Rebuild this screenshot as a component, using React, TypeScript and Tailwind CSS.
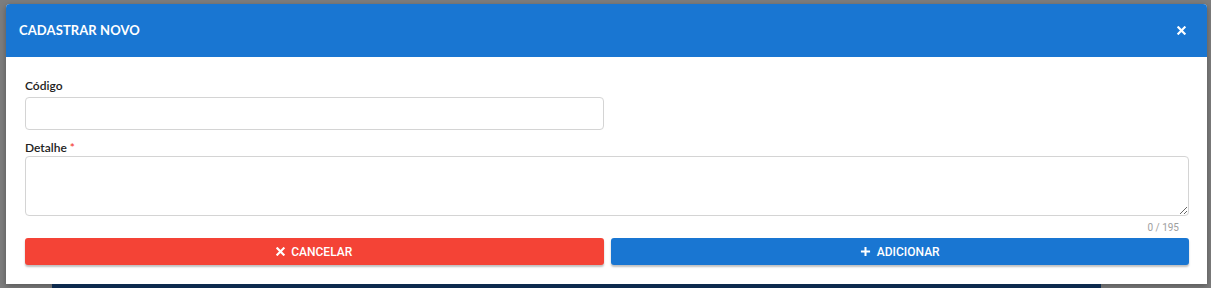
import React, { useState } from 'react';

const App: React.FC = () => {
  const [codigo, setCodigo] = useState('');
  const [detalhe, setDetalhe] = useState('');

  return (
    <div className="h-[288px] w-full overflow-hidden bg-[#7d7d7d] flex flex-col">
      <div className="ml-[6px] mr-[4px] mt-[4px] h-[280px] shrink-0 rounded-t-[4px] bg-white flex flex-col shadow-[0_2px_6px_rgba(0,0,0,0.3)]">
        <div className="h-[53px] bg-[#1976d2] rounded-t-[4px] flex items-center justify-between pl-[13px] pr-[21px]">
          <span className="text-white text-[13px] font-bold font-['Lato',sans-serif] tracking-[0.1px]">CADASTRAR NOVO</span>
          <svg width="9" height="9" viewBox="0 0 10 10" className="text-white">
            <path d="M1.5 1.5 L8.5 8.5 M8.5 1.5 L1.5 8.5" stroke="currentColor" strokeWidth="2.4" strokeLinecap="square" />
          </svg>
        </div>
        <div className="flex flex-col pl-[19px] pr-[18px] pt-[21px] font-['Lato',sans-serif]">
          <label className="text-[12px] font-semibold text-[#222] leading-[16px] mb-[3px]">Código</label>
          <div className="grid grid-cols-2 gap-[7px]">
            <input
              value={codigo}
              onChange={(e) => setCodigo(e.target.value)}
              className="h-[33px] border border-[#d4d4d4] rounded-[4px] px-2 text-[13px] outline-none"
            />
          </div>
          <label className="mt-[10px] text-[12px] font-semibold text-[#222] leading-[16px]">
            Detalhe <span className="text-[#f44336]">*</span>
          </label>
          <textarea
            value={detalhe}
            onChange={(e) => setDetalhe(e.target.value)}
            maxLength={195}
            className="h-[60px] border border-[#d4d4d4] rounded-[4px] px-2 py-1 text-[13px] outline-none"
          />
          <div className="text-right text-[10px] text-[#9e9e9e] leading-[14px] pr-[10px] mt-[5px] font-['Roboto',sans-serif]">
            {detalhe.length} / 195
          </div>
          <div className="grid grid-cols-2 gap-[7px] mt-[3px] font-['Roboto',sans-serif]">
            <button className="h-[27px] rounded-[3px] bg-[#f44336] text-white text-[12px] font-medium flex items-center justify-center gap-[6px] shadow-[0_2px_2px_rgba(0,0,0,0.25)]">
              <svg width="9" height="9" viewBox="0 0 10 10">
                <path d="M1.5 1.5 L8.5 8.5 M8.5 1.5 L1.5 8.5" stroke="white" strokeWidth="2.4" strokeLinecap="square" />
              </svg>
              CANCELAR
            </button>
            <button className="h-[27px] rounded-[3px] bg-[#1976d2] text-white text-[12px] font-medium flex items-center justify-center gap-[6px] shadow-[0_2px_2px_rgba(0,0,0,0.25)]">
              <svg width="11" height="11" viewBox="0 0 12 12">
                <path d="M6 1 V11 M1 6 H11" stroke="white" strokeWidth="2.2" />
              </svg>
              ADICIONAR
            </button>
          </div>
        </div>
      </div>
      <div className="flex-1 bg-[#0d2a4d] ml-[52px] mr-[110px]" />
    </div>
  );
};

export default App;
